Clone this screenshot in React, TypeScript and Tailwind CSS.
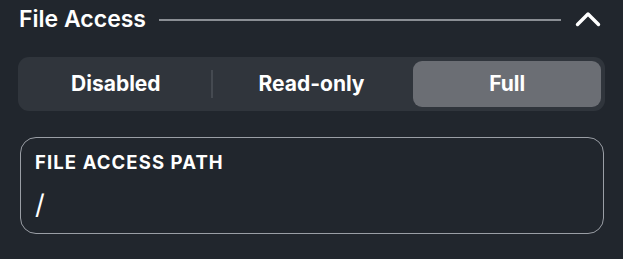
const options = ["Disabled", "Read-only", "Full"];

export default function App() {
  const selected = "Full";

  return (
    <div className="w-[623px] h-[259px] bg-[#21262d] text-white font-['Inter',sans-serif] px-[18px] pt-[2px] overflow-hidden">
      <div className="flex items-center h-[34px]">
        <h2 className="text-[23px] font-semibold leading-none pl-[1px]">File Access</h2>
        <div className="flex-1 h-[2px] bg-[#8a8e94] ml-[13px] mr-[14px] mt-[1px]" />
        <svg className="w-[26px] h-[16px] mr-[4px]" viewBox="0 0 26 16" fill="none">
          <path d="M2.5 13.5 L13 3 L23.5 13.5" stroke="white" strokeWidth={3.4} strokeLinecap="round" strokeLinejoin="round" />
        </svg>
      </div>

      <div className="mt-[21px] flex items-center h-[54px] rounded-[11px] bg-[#30353c] p-[4px]">
        {options.map((o, i) => {
          const active = o === selected;
          const showDivider = i > 0 && options[i - 1] !== selected && !active;
          return (
            <div key={o} className="contents">
              {i > 0 && (
                <div className={`w-[2px] h-[28px] ml-[1px] mr-[5px] ${showDivider ? "bg-[#454a51]" : "bg-transparent"}`} />
              )}
              <button
                className={`flex-1 h-full rounded-[9px] text-[21px] font-bold ${active ? "bg-[#6b6e74]" : ""}`}
              >
                {o}
              </button>
            </div>
          );
        })}
      </div>

      <div className="mt-[26px] ml-[2px] mr-[1px] h-[97px] rounded-[16px] border-[1.5px] border-[#9a9ea5] px-[14px] pt-[13px]">
        <div className="text-[18.5px] font-bold tracking-[1.1px] leading-[22px]">FILE ACCESS PATH</div>
        <input
          className="mt-[16px] w-full bg-transparent outline-none text-[27px] leading-[32px] text-white"
          defaultValue="/"
        />
      </div>
    </div>
  );
}
